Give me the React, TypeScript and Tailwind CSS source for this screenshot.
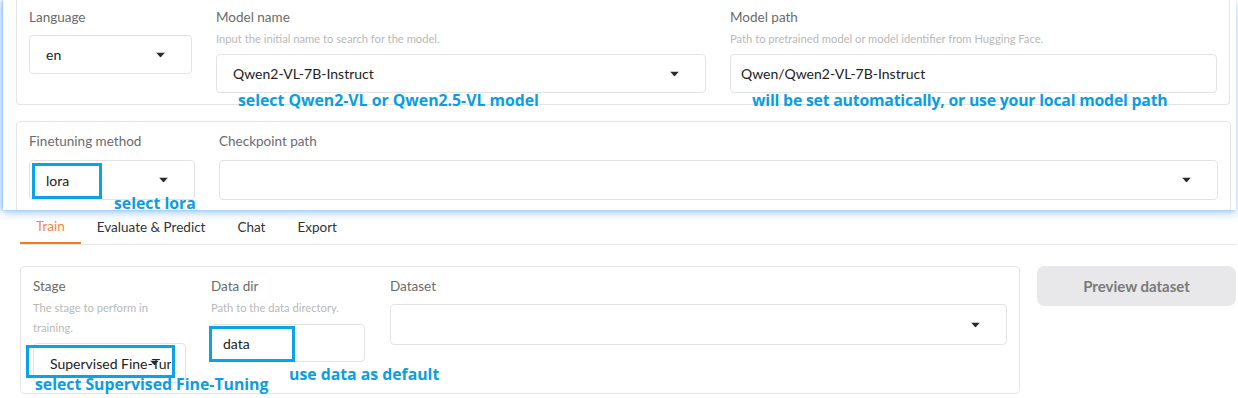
import type { ReactNode } from 'react';

function Caret() {
  return (
    <svg width="9" height="5" viewBox="0 0 9 5" className="absolute right-[26px] top-1/2 -translate-y-1/2">
      <path d="M0 0h9L4.5 5z" fill="#2b2b2b" />
    </svg>
  );
}

function Select({ value, h = 'h-[39px]', className = '' }: { value?: string; h?: string; className?: string }) {
  return (
    <div className={`relative ${h} rounded border border-[#e3e3e3] bg-white flex items-center pl-4 pr-[14px] ${className}`}>
      <span className="text-[14px] text-[#222] whitespace-nowrap overflow-hidden">{value}</span>
      <Caret />
    </div>
  );
}

function Label({ children }: { children: ReactNode }) {
  return <div className="text-[13.5px] leading-5 text-[#6b6b6b]">{children}</div>;
}

function Info({ children }: { children: ReactNode }) {
  return <div className="mt-[2px] text-[11.2px] leading-5 text-[#b8b8b8]">{children}</div>;
}

function Note({ children, className }: { children: ReactNode; className: string }) {
  return (
    <div className={`absolute whitespace-nowrap text-[15.8px] leading-5 font-bold text-[#0b9de2] ${className}`} style={{ fontFamily: '"Open Sans", sans-serif' }}>
      {children}
    </div>
  );
}

export default function App() {
  return (
    <div className="w-[1238px] h-[398px] bg-white overflow-hidden" style={{ fontFamily: 'Lato, "Noto Sans", sans-serif' }}>
      {/* pasted top panel */}
      <div className="relative ml-[3px] mr-[2px] h-[210px] overflow-hidden bg-white shadow-[0_3px_8px_rgba(96,165,250,0.55),-2px_0_3px_rgba(96,165,250,0.5)]">
        <div className="ml-[13px] mr-[6px] h-[105px] rounded-b border border-t-0 border-[#e5e5e5] px-3 pt-[7px]">
          <div className="grid grid-cols-[163px_490px_487px] gap-x-6">
            <div>
              <Label>Language</Label>
              <Select value="en" className="mt-2" />
            </div>
            <div>
              <Label>Model name</Label>
              <Info>Input the initial name to search for the model.</Info>
              <Select value="Qwen2-VL-7B-Instruct" className="mt-[5px]" />
            </div>
            <div>
              <Label>Model path</Label>
              <Info>Path to pretrained model or model identifier from Hugging Face.</Info>
              <div className="mt-[5px] h-[39px] rounded border border-[#e3e3e3] flex items-center pl-[10px] text-[14px] text-[#222]">
                Qwen/Qwen2-VL-7B-Instruct
              </div>
            </div>
          </div>
        </div>

        <div className="mt-4 ml-[13px] mr-[5px] h-[110px] rounded border border-[#e5e5e5] px-3 pt-[9px]">
          <div className="grid grid-cols-[166px_999px] gap-x-6">
            <div>
              <Label>Finetuning method</Label>
              <Select value="lora" h="h-[40px]" className="mt-[9px]" />
            </div>
            <div>
              <Label>Checkpoint path</Label>
              <Select h="h-[40px]" className="mt-[9px]" />
            </div>
          </div>
        </div>

        <div className="absolute left-[29px] top-[163px] w-[70px] h-[36px] border-[3px] border-[#0aa3e6]" />
        <Note className="left-[235px] top-[90px]">select Qwen2-VL or Qwen2.5-VL model</Note>
        <Note className="left-[749px] top-[90px] tracking-[-0.2px]">will be set automatically, or use your local model path</Note>
        <Note className="left-[111px] top-[193px]">select lora</Note>
      </div>

      {/* tabs */}
      <div className="ml-5 mr-[2px] flex border-b border-[#e5e5e5] text-[13.5px]">
        <div className="-mb-px h-[34px] px-4 flex items-center border-b-2 border-[#f07c1f] text-[#f0883a]">Train</div>
        <div className="h-[34px] px-4 flex items-center text-[#333]">Evaluate &amp; Predict</div>
        <div className="h-[34px] px-4 flex items-center text-[#333]">Chat</div>
        <div className="h-[34px] px-4 flex items-center text-[#333]">Export</div>
      </div>

      {/* train section */}
      <div className="relative mt-[21px] ml-5 flex gap-[17px]">
        <div className="w-[1000px] h-[128px] rounded border border-[#e5e5e5] px-3 pt-[9px]">
          <div className="grid grid-cols-[153px_154px_617px] gap-x-[25px]">
            <div>
              <Label>Stage</Label>
              <Info>The stage to perform in training.</Info>
              <Select value="Supervised Fine-Tuning" h="h-[40px]" className="mt-[5px]" />
            </div>
            <div>
              <Label>Data dir</Label>
              <Info>Path to the data directory.</Info>
              <div className="mt-[6px] h-[38px] rounded border border-[#e3e3e3] flex items-center pl-[11px] text-[14px] text-[#222]">data</div>
            </div>
            <div>
              <Label>Dataset</Label>
              <Select h="h-[41px]" className="mt-2" />
            </div>
          </div>
        </div>
        <button className="w-[199px] h-[40px] rounded-lg bg-[#e8e8ea] text-[15px] font-bold text-[#7a7a7a]">Preview dataset</button>

        <div className="absolute left-[6px] top-[79px] w-[149px] h-[33px] border-[3px] border-[#0aa3e6]" />
        <div className="absolute left-[189px] top-[60px] w-[86px] h-[36px] border-[3px] border-[#0aa3e6]" />
        <Note className="left-[269px] top-[98px]">use data as default</Note>
        <Note className="left-[15px] top-[108px]">select Supervised Fine-Tuning</Note>
      </div>
    </div>
  );
}
